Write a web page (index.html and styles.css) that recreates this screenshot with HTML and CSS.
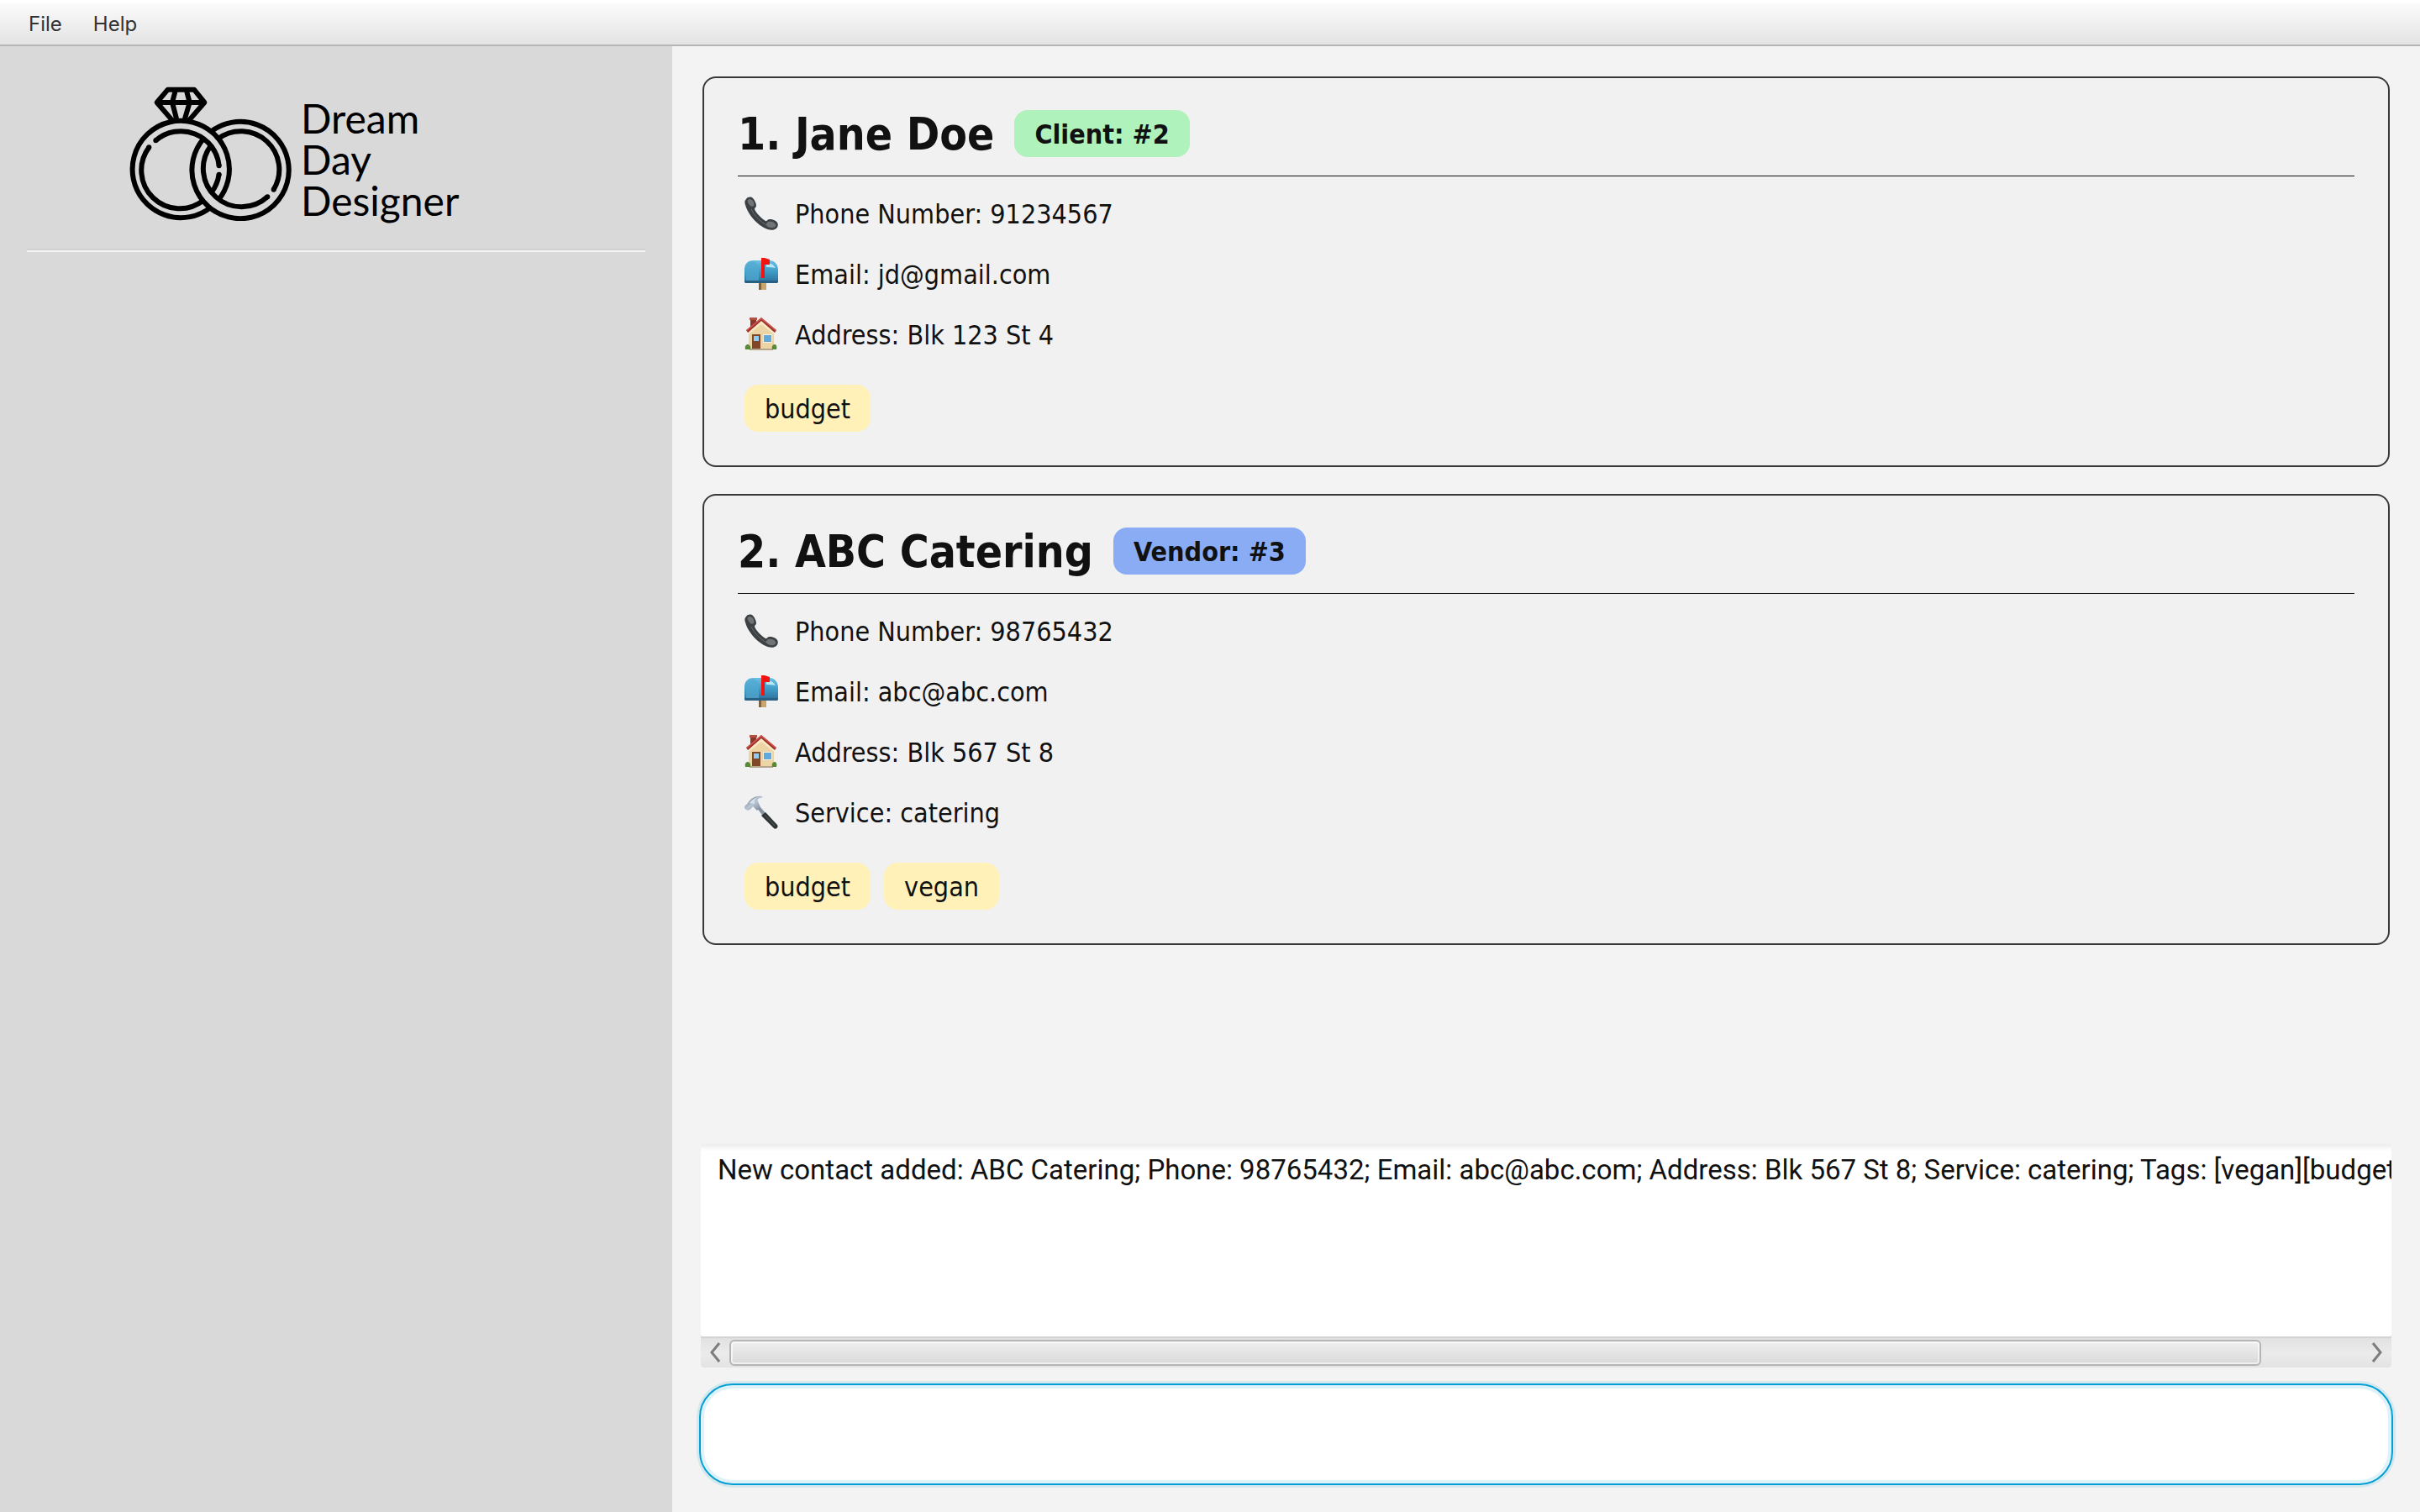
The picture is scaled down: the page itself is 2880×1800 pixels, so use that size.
FILE: index.html
```html
<!DOCTYPE html>
<html lang="en">
<head>
<meta charset="utf-8">
<title>Dream Day Designer</title>
<link rel="stylesheet" href="styles.css">
</head>
<body>
<svg class="sprite" aria-hidden="true">
  <defs>
    <linearGradient id="box-blue" x1="0" y1="0" x2="0" y2="1">
      <stop offset="0" stop-color="#6cc0e2"/><stop offset=".5" stop-color="#3f9ac6"/><stop offset="1" stop-color="#2b6d97"/>
    </linearGradient>
    <linearGradient id="steel" x1="0" y1="0" x2="1" y2="1">
      <stop offset="0" stop-color="#5d6d80"/><stop offset=".5" stop-color="#b9c6d4"/><stop offset="1" stop-color="#75808c"/>
    </linearGradient>
  </defs>
  <symbol id="icon-phone" viewBox="0 0 40 40">
    <path d="M2 3C4 0 8 0 10 2c2 2 4 6 4 9 0 2-2 2-2 4 2 5 8 11 13 14 2 1 2-2 5-2 4 0 8 2 9 4 2 3 0 7-3 8-4 2-9 0-13-2C14 32 4 21 1 10 0 7 0 5 2 3z" fill="#3d4144"/>
    <path d="M4 4c2-2 4-1 6 1 1 2 2 4 1 6-1 1-3 1-4 0C5 9 3 6 4 4zM27 31c2-2 6-1 8 0 3 2 3 4 1 5-2 2-6 1-8 0s-3-3-1-5z" fill="#707476"/>
    <path d="M8 15c4 8 10 14 18 19" fill="none" stroke="#686d70" stroke-width="1"/>
  </symbol>
  <symbol id="icon-mailbox" viewBox="0 0 40 40">
    <path d="M17 28h9v11h-9z" fill="#c7a56c"/>
    <path d="M17 28h3v11h-3z" fill="#836238"/>
    <path d="M0 15C0 8 4 4 10 4h20c6 0 10 5 10 12v13c0 1-1 2-2 2H2c-1 0-2-1-2-2z" fill="url(#box-blue)"/>
    <path d="M1 15C1 9 5 5 9 5s8 4 8 10v14H2z" fill="#52a9d2" opacity=".7"/>
    <path d="M0 28h40v1c0 1-1 2-2 2H2c-1 0-2-1-2-2z" fill="#285f83"/>
    <path d="M26 8c3-2 8 0 11 5-4-1-7-1-11-1z" fill="#b8e7f6"/>
    <path d="M20 1h4l6 2v6h-6v16h-4z" fill="#f21410"/>
  </symbol>
  <symbol id="icon-house" viewBox="0 0 40 40">
    <path d="M7 1h7v12H7z" fill="#8e3528"/>
    <path d="M6 0h9v3H6z" fill="#b05142"/>
    <path d="M5 15 20 3l15 12v23H5z" fill="#ecd4a4"/>
    <path d="M20 4 5 16v4L20 8l15 12v-4z" fill="#f8e9c4"/>
    <path d="M20 0 2 15l2 3L20 4l16 14 2-3z" fill="#9e2f2c"/>
    <path d="M20 0 2 15l1 1L20 2l17 14 1-1z" fill="#d25a50"/>
    <path d="M9 20h10v18H9z" fill="#7f4629"/>
    <path d="M11 22h6v6h-6z" fill="#8fcdf2"/>
    <path d="M22 20h11v10H22z" fill="#f7f1e0"/>
    <path d="M23 21h9v8h-9z" fill="#5fa9dd"/>
    <path d="M6 37h28v2H6z" fill="#b4a68c"/>
    <path d="M1 38c-1-4 1-6 3-6s4 3 3 6zM33 38c-1-4 1-6 3-6s3 3 2 6z" fill="#568a35"/>
  </symbol>
  <symbol id="icon-hammer" viewBox="0 0 40 40">
    <path d="M15 15 18 13 27 23 23 26z" fill="#8592a1"/>
    <path d="M20 24 25 20 39 35c2 3-2 6-4 4z" fill="#2e3434"/>
    <path d="m24 23 12 13" stroke="#596160" stroke-width="1"/>
    <path d="M0 14c0-2 3-3 4-5C8 3 13 0 21 1c1 0 0 2-1 2-4 0-5 2-4 4l3 7-4 4-5-5c-1 1-2 3-4 4-3 2-6-1-6-3z" fill="url(#steel)"/>
    <path d="M6 9c3-4 6-6 11-7-4 2-6 4-5 8z" fill="#d6e2ee"/>
  </symbol>
</svg>

<nav class="menubar" aria-label="Main menu">
  <button class="menu" type="button">File</button>
  <button class="menu" type="button">Help</button>
</nav>

<div class="workspace">
  <aside class="sidebar">
    <div class="logo">
      <svg class="logo-mark" viewBox="41 41 582 478" aria-hidden="true">
        <g fill="none" stroke="#000" stroke-width="18" stroke-linejoin="round">
          <path d="M357 447A173 173 0 1 0 331 472"/>
          <path d="M331 202A173 173 0 1 1 305 227"/>
          <path d="M195 162 139 97l39-46h94l37 46-56 65M139 97h170M206 51l-12 46 17 65M244 51l12 46-19 65"/>
          <path d="M305 447A137 137 0 0 1 111 257M331 252A137 137 0 0 0 534 434M331 422A137 137 0 0 0 361 352M357 227A137 137 0 0 1 556 408M135 233A137 137 0 0 1 361 323"/>
        </g>
        <g>
          <circle cx="111" cy="257" r="9"/><circle cx="135" cy="233" r="9"/>
          <circle cx="361" cy="323" r="9"/><circle cx="361" cy="354" r="9"/>
          <circle cx="556" cy="408" r="9"/><circle cx="534" cy="434" r="9"/>
        </g>
      </svg>
      <div class="logo-text">Dream<br>Day<br>Designer</div>
    </div>
    <hr class="separator">
  </aside>

  <main class="main">
    <div class="contacts">
      <article class="card">
        <header class="card-header">
          <h2 class="name">1. Jane Doe</h2>
          <span class="badge client">Client: #2</span>
        </header>
        <ul class="details">
          <li><svg class="icon" aria-hidden="true"><use href="#icon-phone"/></svg><span>Phone Number: 91234567</span></li>
          <li><svg class="icon" aria-hidden="true"><use href="#icon-mailbox"/></svg><span>Email: jd@gmail.com</span></li>
          <li><svg class="icon" aria-hidden="true"><use href="#icon-house"/></svg><span>Address: Blk 123 St 4</span></li>
        </ul>
        <div class="tags"><span class="tag">budget</span></div>
      </article>

      <article class="card">
        <header class="card-header">
          <h2 class="name">2. ABC Catering</h2>
          <span class="badge vendor">Vendor: #3</span>
        </header>
        <ul class="details">
          <li><svg class="icon" aria-hidden="true"><use href="#icon-phone"/></svg><span>Phone Number: 98765432</span></li>
          <li><svg class="icon" aria-hidden="true"><use href="#icon-mailbox"/></svg><span>Email: abc@abc.com</span></li>
          <li><svg class="icon" aria-hidden="true"><use href="#icon-house"/></svg><span>Address: Blk 567 St 8</span></li>
          <li><svg class="icon" aria-hidden="true"><use href="#icon-hammer"/></svg><span>Service: catering</span></li>
        </ul>
        <div class="tags"><span class="tag">budget</span><span class="tag">vegan</span></div>
      </article>
    </div>

    <section class="result">
      <textarea class="result-text" aria-label="Result" wrap="off" readonly>New contact added: ABC Catering; Phone: 98765432; Email: abc@abc.com; Address: Blk 567 St 8; Service: catering; Tags: [vegan][budget]</textarea>
      <div class="scrollbar">
        <button class="arrow" type="button" aria-label="Scroll left"><svg viewBox="0 0 12 24"><path d="M11 1 2 12l9 11"/></svg></button>
        <div class="track"><div class="thumb" style="width:93.8%"></div></div>
        <button class="arrow" type="button" aria-label="Scroll right"><svg viewBox="0 0 12 24"><path d="m1 1 9 11-9 11"/></svg></button>
      </div>
    </section>

    <input class="command" type="text" aria-label="Command">
  </main>
</div>
</body>
</html>
```
FILE: styles.css
```css
* {
  box-sizing: border-box;
}

body {
  margin: 0;
  min-height: 100vh;
  display: flex;
  flex-direction: column;
  background: #f3f3f3;
  color: #111;
  font: 32px/40px "DejaVu Sans Condensed", "DejaVu Sans", sans-serif;
}

.sprite {
  position: absolute;
  width: 0;
  height: 0;
}

/* Menu bar */
.menubar {
  display: flex;
  gap: 5px;
  padding: 0 18px;
  border-bottom: 2px solid #b5b5b5;
  background: linear-gradient(#fff 2px, #fbfbfb 4px, #e3e3e3);
}

.menu {
  height: 53px;
  padding: 4px 16px 0;
  border: 0;
  background: none;
  color: #333;
  font: 24px/32px Inter, sans-serif;
}

.workspace {
  flex: 1;
  display: flex;
}

/* Sidebar */
.sidebar {
  flex: 0 0 800px;
  padding: 48px 32px;
  background: #d9d9d9;
}

.logo {
  display: flex;
  align-items: flex-end;
  gap: 10px;
  padding-left: 122px;
}

.logo-mark {
  width: 194px;
  height: 160px;
}

.logo-text {
  color: #000;
  font: 48px/49px Lato, sans-serif;
}

.separator {
  height: 4px;
  margin: 33px 0 0;
  border: 0;
  border-top: 2px solid #d0d0d0;
  background: #f3f3f3;
}

/* Contact cards */
.main {
  flex: 1;
  min-width: 0;
  display: flex;
  flex-direction: column;
  padding: 36px 32px 32px;
}

.contacts {
  flex: 1;
  display: flex;
  flex-direction: column;
  gap: 32px;
  padding: 0 4px;
}

.card {
  padding: 32px 40px 40px;
  border: 2px solid #383838;
  border-radius: 16px;
  background: #f1f1f1;
}

.card-header {
  display: flex;
  align-items: center;
  gap: 24px;
  height: 85px;
  padding-bottom: 16px;
  border-bottom: 1px solid #111;
}

.name {
  margin: 0;
  padding-top: 2px;
  font-size: 53px;
  line-height: 64px;
}

.badge,
.tag {
  padding: 9px 24px 7px;
  border-radius: 16px;
}

.badge {
  font-weight: bold;
}

.client {
  background: #aff2bb;
}

.vendor {
  background: #89acf5;
}

.details {
  margin: 8px 0 24px;
  padding: 0 8px;
  list-style: none;
}

.details li {
  display: flex;
  align-items: center;
  gap: 20px;
  height: 72px;
}

.details span {
  padding-top: 2px;
}

.icon {
  width: 40px;
  height: 40px;
}

.tags {
  display: flex;
  gap: 16px;
  padding: 0 8px;
}

.tag {
  background: #fff1b8;
}

/* Result display */
.result {
  margin: 0 2px;
}

.result-text {
  display: block;
  width: 100%;
  height: 229px;
  padding: 11px 20px;
  border: 0;
  border-radius: 4px;
  outline: 0;
  resize: none;
  overflow: hidden;
  background: linear-gradient(#ebebeb, #fff 8px);
  color: #111;
  font: 33px/40px Roboto, sans-serif;
}

.scrollbar {
  display: flex;
  height: 37px;
  border-top: 2px solid #d3d3d3;
  border-radius: 0 0 4px 4px;
  background: linear-gradient(#e1e1e1, #ebebeb 50%, #e3e3e3);
}

.arrow {
  display: flex;
  justify-content: center;
  align-items: center;
  width: 34px;
  padding: 0 0 2px;
  border: 0;
  background: none;
}

.arrow svg {
  width: 12px;
  height: 24px;
  fill: none;
  stroke: #7d7d7d;
  stroke-width: 3;
}

.track {
  flex: 1;
  padding: 2px 0;
}

.thumb {
  height: 31px;
  border: 2px solid #b5b5b5;
  border-radius: 6px;
  background: linear-gradient(#f0f0f0, #d9d9d9);
  box-shadow: inset 0 0 0 2px #ffffff99;
}

/* Command box, drawn in its focused state */
.command {
  width: 100%;
  height: 121px;
  margin-top: 19px;
  padding: 0 32px;
  border: 2px solid #039ed3;
  border-radius: 40px;
  outline: 0;
  background: #fff;
  box-shadow: 0 0 0 3px #d5e8ee, inset 0 0 0 4px #def2f9;
  font: inherit;
}
```
